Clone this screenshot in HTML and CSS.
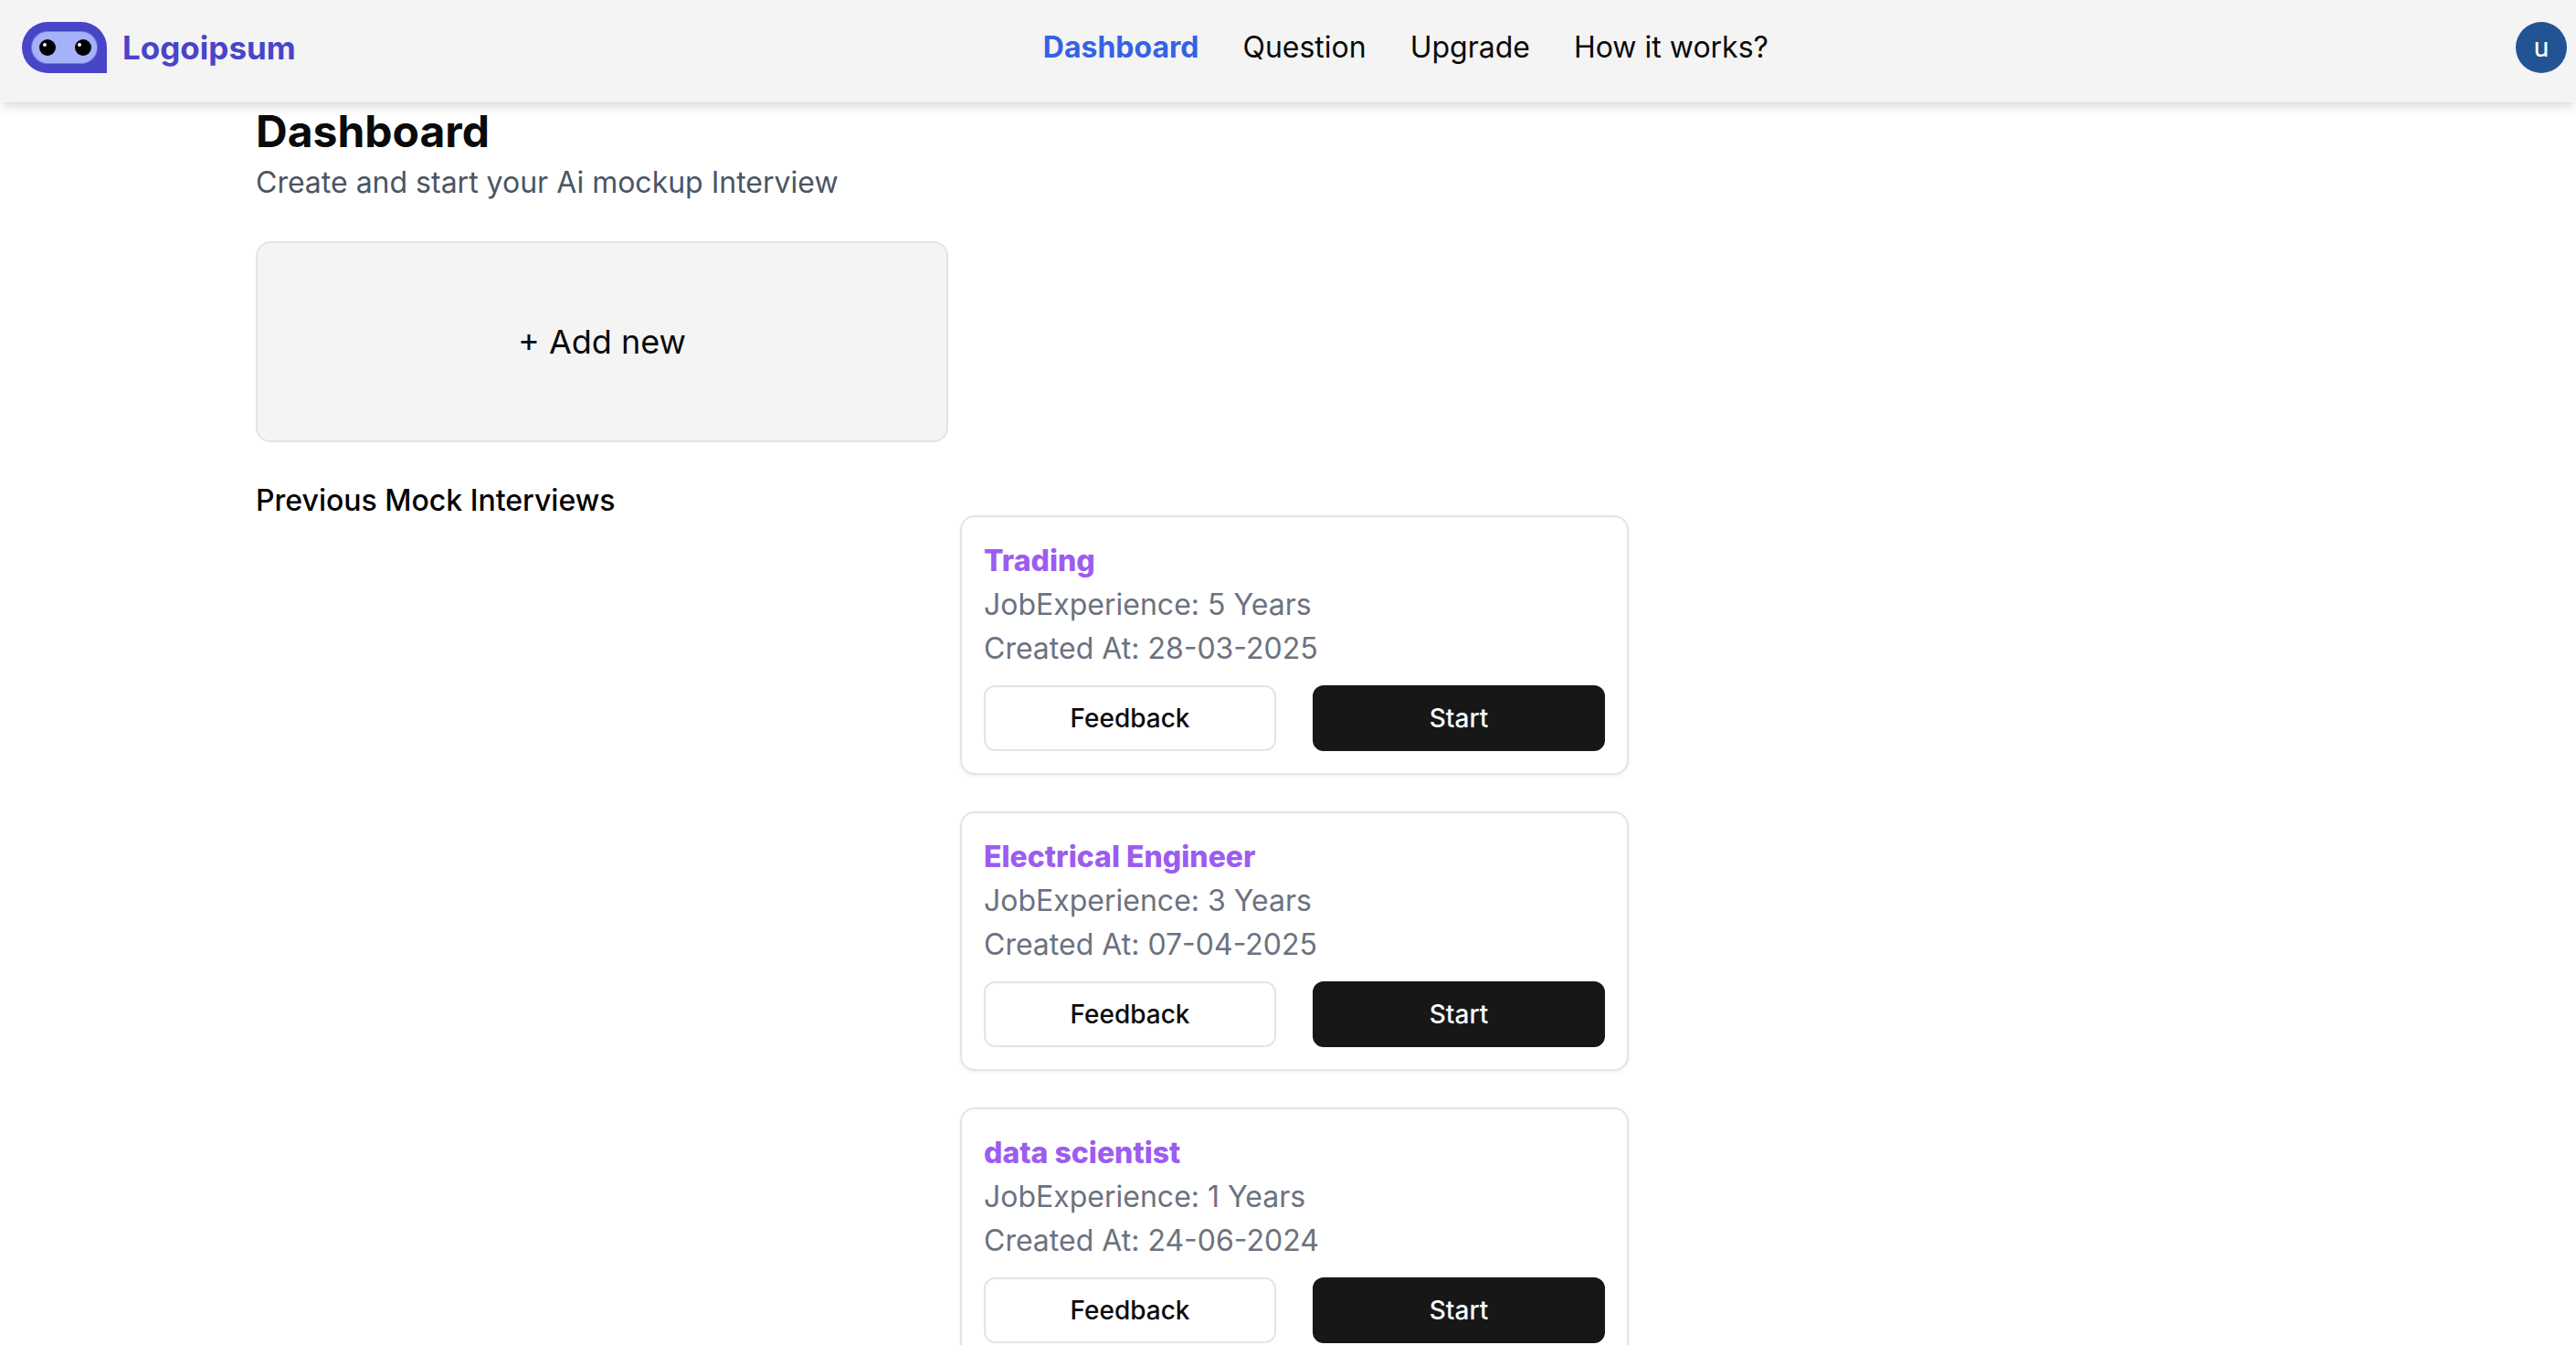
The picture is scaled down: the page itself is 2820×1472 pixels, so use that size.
FILE: index.html
```html
<!DOCTYPE html>
<html lang="en">
<head>
  <meta charset="utf-8">
  <meta name="viewport" content="width=device-width, initial-scale=1">
  <title>Dashboard</title>
  <link rel="stylesheet" href="styles.css">
</head>
<body>
  <header class="header">
    <a class="logo" href="#">
      <svg class="logo-mark" viewBox="0 0 93 56" aria-hidden="true">
        <path fill="#4945c8" d="M28 0H65A28 28 0 0 1 93 28V56H28A28 28 0 0 1 28 0Z"/>
        <rect x="10" y="10" width="73" height="36" rx="18" fill="#7a78e2"/>
        <rect x="11" y="11" width="71" height="34" rx="17" fill="#a5b2f8"/>
        <circle cx="28" cy="28" r="9" fill="#000"/>
        <circle cx="67" cy="28" r="9" fill="#000"/>
        <circle cx="25" cy="25" r="2" fill="#fff"/>
        <circle cx="63" cy="25" r="2" fill="#fff"/>
      </svg>
      <span>Logoipsum</span>
    </a>
    <nav class="nav">
      <a class="nav-link active" href="#">Dashboard</a>
      <a class="nav-link" href="#">Question</a>
      <a class="nav-link" href="#">Upgrade</a>
      <a class="nav-link" href="#">How it works?</a>
    </nav>
    <button class="avatar" type="button" aria-label="Open user menu">u</button>
  </header>

  <main class="main">
    <h1 class="title">Dashboard</h1>
    <p class="subtitle">Create and start your Ai mockup Interview</p>
    <div class="columns">
      <button class="add" type="button">+ Add new</button>
    </div>
    <h2 class="section-title">Previous Mock Interviews</h2>
    <div class="columns">
      <div class="interviews">
        <article class="card">
          <h3 class="card-title">Trading</h3>
          <p class="card-text">JobExperience: 5 Years</p>
          <p class="card-text">Created At: 28-03-2025</p>
          <div class="actions">
            <button class="btn btn-outline" type="button">Feedback</button>
            <button class="btn btn-solid" type="button">Start</button>
          </div>
        </article>
        <article class="card">
          <h3 class="card-title">Electrical Engineer</h3>
          <p class="card-text">JobExperience: 3 Years</p>
          <p class="card-text">Created At: 07-04-2025</p>
          <div class="actions">
            <button class="btn btn-outline" type="button">Feedback</button>
            <button class="btn btn-solid" type="button">Start</button>
          </div>
        </article>
        <article class="card">
          <h3 class="card-title">data scientist</h3>
          <p class="card-text">JobExperience: 1 Years</p>
          <p class="card-text">Created At: 24-06-2024</p>
          <div class="actions">
            <button class="btn btn-outline" type="button">Feedback</button>
            <button class="btn btn-solid" type="button">Start</button>
          </div>
        </article>
      </div>
    </div>
  </main>
</body>
</html>
```
FILE: styles.css
```css
* {
  box-sizing: border-box;
  margin: 0;
}

body {
  background: #fff;
  color: #0a0a0a;
  font: 400 32px/48px Inter, sans-serif;
}

button {
  font: inherit;
  color: inherit;
  cursor: pointer;
}

a {
  color: inherit;
  text-decoration: none;
}

.header {
  display: flex;
  align-items: center;
  justify-content: space-between;
  padding: 24px 10px 32px 24px;
  background: #f4f4f4;
  box-shadow: 0 8px 12px -2px rgba(0, 0, 0, 0.1), 0 4px 8px -4px rgba(0, 0, 0, 0.1);
}

.logo {
  display: flex;
  align-items: center;
  gap: 17px;
  color: #4945c8;
  font-size: 35px;
  font-weight: 700;
  line-height: 44px;
}

.logo-mark {
  width: 93px;
  height: 56px;
}

.nav {
  display: flex;
  gap: 48px;
}

.nav-link.active {
  color: #3662e3;
  font-weight: 700;
}

.avatar {
  width: 56px;
  height: 56px;
  padding: 0;
  border: 0;
  border-radius: 50%;
  background: #225493;
  color: #fff;
  font: 400 30px/52px Roboto, sans-serif;
}

.main {
  padding: 4px 266px 40px 280px;
}

.title {
  font-size: 48px;
  font-weight: 700;
  line-height: 56px;
}

.subtitle {
  margin-bottom: 36px;
  color: #4b5563;
  line-height: 56px;
}

.columns {
  display: grid;
  grid-template-columns: repeat(3, 1fr);
}

.add {
  padding: 80px;
  border: 2px solid #e4e4e4;
  border-radius: 16px;
  background: #f4f4f4;
  font-size: 36px;
  line-height: 56px;
}

.section-title {
  margin-top: 48px;
  color: #000;
  font-size: 32px;
  font-weight: 500;
  line-height: 32px;
}

.interviews {
  grid-column: 2;
  display: grid;
  gap: 40px;
  padding: 0 13px;
}

.card {
  padding: 24px;
  border: 2px solid #e4e4e4;
  border-radius: 16px;
  box-shadow: 0 2px 4px rgba(0, 0, 0, 0.06);
}

.card-title {
  color: #9d5cf0;
  font-size: 32px;
  font-weight: 800;
}

.card-text {
  color: #6b7280;
}

.actions {
  display: grid;
  grid-template-columns: 1fr 1fr;
  gap: 40px;
  margin-top: 16px;
}

.btn {
  height: 72px;
  padding: 0 24px;
  border: 2px solid #e4e4e4;
  border-radius: 12px;
  background: #fff;
  font-size: 28px;
  font-weight: 500;
  line-height: 40px;
}

.btn-solid {
  border-color: #171717;
  background: #171717;
  color: #fafafa;
}
```
